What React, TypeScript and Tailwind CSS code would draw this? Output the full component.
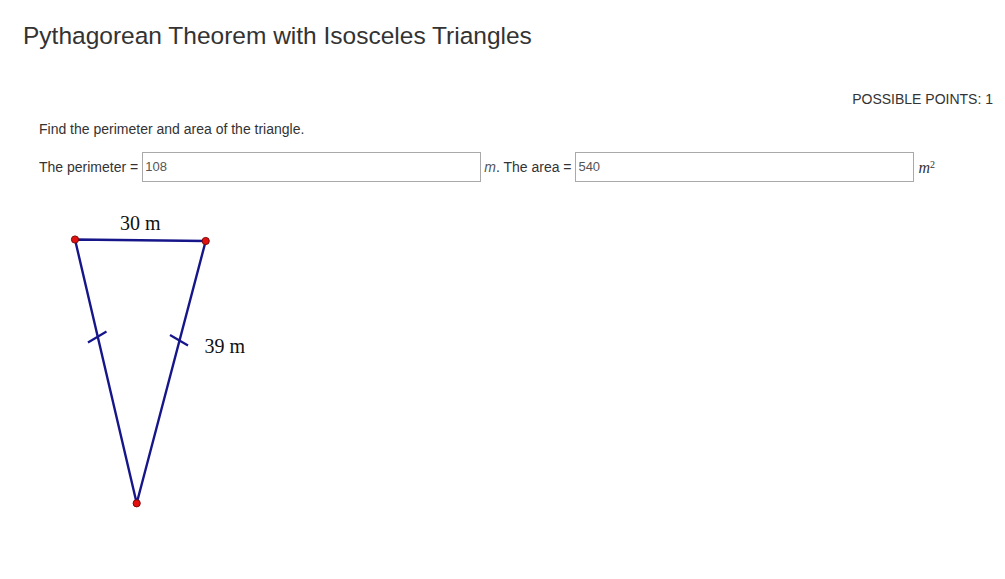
import type { ReactNode } from "react";

function Blank({ value }: { value: string }) {
  return (
    <div className="flex h-[30px] w-[339px] items-center border border-[#a9a9a9] bg-white pl-[2px] text-[13px] text-[#555]">
      {value}
    </div>
  );
}

function Vertex({ x, y }: { x: number; y: number }) {
  return <circle cx={x} cy={y} r={3.6} fill="#e41010" stroke="#7a0a0a" strokeWidth={1} />;
}

function Triangle() {
  const line = "#16168a";
  return (
    <svg width={260} height={330} viewBox="40 195 260 330" className="block">
      <polyline
        points="75,239.5 205.7,241 136.7,503.3 75,239.5"
        fill="none"
        stroke={line}
        strokeWidth={2.4}
        strokeLinejoin="round"
      />
      <line x1={88} y1={342.5} x2={106.5} y2={331.5} stroke={line} strokeWidth={2.2} />
      <line x1={170} y1={335} x2={188} y2={345.5} stroke={line} strokeWidth={2.2} />
      <Vertex x={75} y={239.5} />
      <Vertex x={205.7} y={241} />
      <Vertex x={136.7} y={503.3} />
      <text x={120} y={230} fontFamily="'Liberation Serif', serif" fontSize={20} fill="#111">
        30 m
      </text>
      <text x={204.5} y={352.5} fontFamily="'Liberation Serif', serif" fontSize={20} fill="#111">
        39 m
      </text>
    </svg>
  );
}

function Row({ children }: { children: ReactNode }) {
  return <div className="flex items-center whitespace-pre leading-[20px]">{children}</div>;
}

export default function App() {
  return (
    <div className="h-[579px] w-full bg-white font-['Liberation_Sans',Arial,sans-serif] text-[#333]">
      <h1 className="pl-[23px] pt-[22px] text-[24.5px] leading-[28px] font-normal">
        Pythagorean Theorem with Isosceles Triangles
      </h1>

      <div className="mt-[39px] pr-[12px] text-right text-[14px] leading-[20px]">POSSIBLE POINTS: 1</div>

      <div className="pl-[39px] text-[14px]">
        <p className="mt-[10px] leading-[20px]">Find the perimeter and area of the triangle.</p>

        <div className="mt-[13px]">
          <Row>
            <span className="mr-[4px]">The perimeter =</span>
            <Blank value="108" />
            <span className="ml-[3px] italic text-[#555]">m</span>
            <span>. The area = </span>
            <Blank value="540" />
            <span className="ml-[4px] mt-[2px] font-['Liberation_Serif',serif] text-[16px] italic text-[#333]">
              m<sup className="not-italic text-[10px]">2</sup>
            </span>
          </Row>
        </div>

        <div className="ml-[1px] mt-[13px]">
          <Triangle />
        </div>
      </div>
    </div>
  );
}
